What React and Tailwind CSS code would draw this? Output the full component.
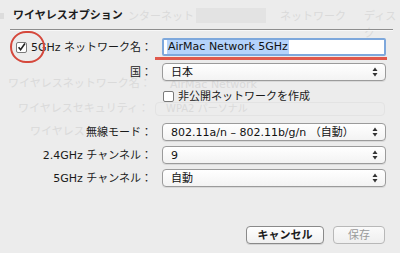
import React from 'react';

const FONT = { fontFamily: '"DejaVu Sans", "Noto Sans CJK JP", sans-serif' };

// 上下矢印（ポップアップボタン）
const Arrows = () => (
  <svg width="6" height="10" viewBox="0 0 6 10" className="shrink-0">
    <path d="M3 0.5 L5.5 4 L0.5 4 Z" fill="#333" />
    <path d="M3 9.5 L5.5 6 L0.5 6 Z" fill="#333" />
  </svg>
);

const PopUp = ({ value }) => (
  <div className="h-[18px] w-[224px] flex items-center justify-between pl-[8px] pr-[7px] rounded-[4px] border border-[#9b9b9b] bg-gradient-to-b from-white to-[#f3f3f3] text-[11px] text-[#111] shadow-[0_1px_0_rgba(0,0,0,0.08)]">
    <span className="leading-none">{value}</span>
    <Arrows />
  </div>
);

const Label = ({ children }) => (
  <div className="w-[153px] text-right text-[11px] text-[#1a1a1a] leading-none pr-[1px]">{children}</div>
);

const Row = ({ label, children, className = '' }) => (
  <div className={`flex items-center gap-[9px] ${className}`}>
    <Label>{label}</Label>
    {children}
  </div>
);

const App = () => {
  return (
    <div className="relative w-[400px] h-[253px] bg-[#ececec] overflow-hidden" style={FONT}>
      {/* 背後のウィンドウ（透けて見える部分） */}
      <div className="absolute inset-0 pointer-events-none text-[11px] text-[#dadada]">
        <div className="absolute left-[0px] top-[13px] w-[4px] h-[6px] bg-[#dcdcdc]" />
        <div className="absolute left-[128px] top-[9px]">ンターネット</div>
        <div className="absolute left-[196px] top-[8px] w-[70px] h-[15px] bg-[#e3e3e3]" />
        <div className="absolute left-[280px] top-[9px]">ネットワーク</div>
        <div className="absolute left-[364px] top-[9px]">ディスク</div>
        <div className="absolute left-[8px] top-[76px]">ワイヤレスネットワーク名：</div>
        <div className="absolute left-[170px] top-[77px]">AirMac Network</div>
        <div className="absolute left-[18px] top-[101px]">ワイヤレスセキュリティ：</div>
        <div className="absolute left-[155px] top-[102px] w-[230px] h-[14px] rounded-[4px] border border-[#e3e3e3] pl-[10px] text-[10px] leading-[12px]">WPA2 パーソナル</div>
        <div className="absolute left-[30px] top-[124px]">ワイヤレス</div>
      </div>

      <div className="relative">
        <div className="h-[29px] pl-[13px] pt-[8px] text-[11px] font-bold text-[#1c1c1c]">ワイヤレスオプション</div>
        <div className="ml-[10px] w-[383px] h-px bg-[#8e8e8e]" />
        <div className="ml-[10px] w-[383px] h-px bg-[#f8f8f8]" />

        {/* 5GHz ネットワーク名 */}
        <div className="flex items-center mt-[7px]">
          <div className="w-[153px] flex items-center justify-end gap-[3px] text-[11px] text-[#1a1a1a] pr-[1px]">
            <span className="w-[11px] h-[11px] bg-white border border-[#7a7a7a] rounded-[2px] flex items-center justify-center mr-[1px]">
              <svg width="10" height="10" viewBox="0 0 10 10">
                <path d="M1.8 5.2 L4 8 L8.8 1.2" fill="none" stroke="#222" strokeWidth="1.8" />
              </svg>
            </span>
            <span className="leading-none">5GHz ネットワーク名：</span>
          </div>
          <div className="ml-[9px] w-[224px] h-[18px] rounded-[2px] border-2 border-[#7ea8dc] bg-white flex items-center pl-[3px]">
            <span className="bg-[#b5d3fb] text-[11px] text-[#111] leading-[14px] px-[1px]">AirMac Network 5GHz</span>
          </div>
        </div>

        <Row label="国：" className="mt-[7px]">
          <PopUp value="日本" />
        </Row>

        <div className="flex items-center mt-[10px] ml-[163px] gap-[4px] text-[11px] text-[#1a1a1a]">
          <span className="w-[11px] h-[11px] bg-white border border-[#7a7a7a] rounded-[2px]" />
          <span className="leading-none">非公開ネットワークを作成</span>
        </div>

        <Row label="無線モード：" className="mt-[21px]">
          <PopUp value="802.11a/n – 802.11b/g/n （自動）" />
        </Row>
        <Row label="2.4GHz チャンネル：" className="mt-[5px]">
          <PopUp value="9" />
        </Row>
        <Row label="5GHz チャンネル：" className="mt-[5px]">
          <PopUp value="自動" />
        </Row>

        <div className="flex justify-end gap-[9px] mt-[39px] pr-[15px]">
          <button className="w-[78px] h-[18px] rounded-[4px] border border-[#8a8a8a] bg-gradient-to-b from-white to-[#f0f0f0] text-[11px] font-bold text-[#1a1a1a] leading-none shadow-[0_1px_0_rgba(0,0,0,0.1)]">
            キャンセル
          </button>
          <button className="w-[52px] h-[18px] rounded-[4px] border border-[#b8b8b8] bg-gradient-to-b from-[#fafafa] to-[#efefef] text-[11px] text-[#9a9a9a] leading-none">
            保存
          </button>
        </div>
      </div>

      {/* 注釈：赤丸と赤線 */}
      <div className="absolute left-[10px] top-[31px] w-[35px] h-[32px] rounded-full border-2 border-[#d5483c]" />
      <div className="absolute left-[155px] top-[57px] w-[232px] h-[3px] bg-[#e0594c]" />
    </div>
  );
};

export default App;
